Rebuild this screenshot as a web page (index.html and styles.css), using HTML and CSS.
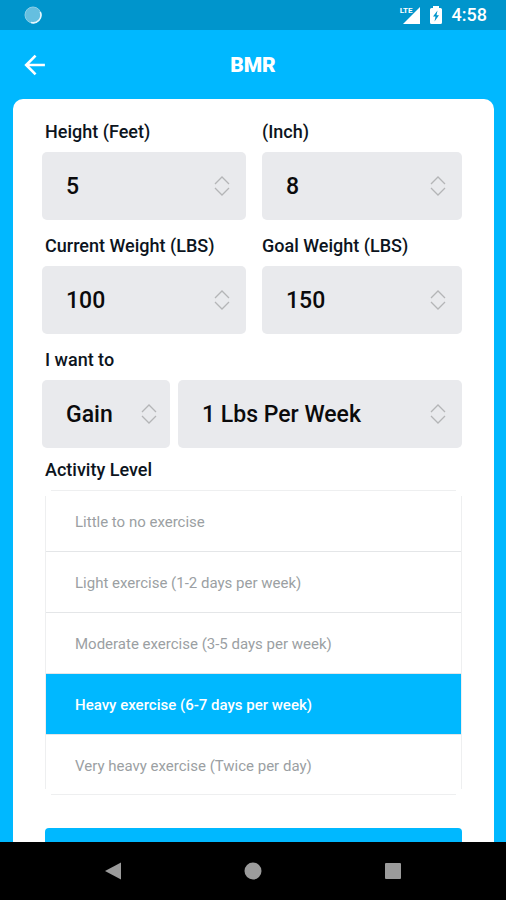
FILE: index.html
```html
<!DOCTYPE html>
<html lang="en">
<head>
<meta charset="utf-8">
<meta name="viewport" content="width=device-width, initial-scale=1">
<title>BMR</title>
<link rel="stylesheet" href="styles.css">
</head>
<body>
<svg class="defs" aria-hidden="true">
  <symbol id="stepper" viewBox="0 0 16 20">
    <path d="M1 8 8 1l7 7M1 12l7 7 7-7" fill="none" stroke="#b4b5b7" stroke-width="1.3"/>
  </symbol>
</svg>
<div class="status">
  <svg class="status-sync" viewBox="0 0 18 18" aria-hidden="true">
    <circle cx="9" cy="9" r="8" fill="#65bfe0" stroke="#8bcfe8" stroke-width="1"/>
    <path d="M16.300 6A7.800 7.800 0 0 1 7 16.500" fill="none" stroke="#e6f7fd" stroke-width="1.6"/>
  </svg>
  <div class="status-right">
    <div class="signal">
      <span class="lte">LTE</span>
      <svg class="signal-icon" viewBox="0 0 17 17" aria-hidden="true"><path d="M17 0v17H0z" fill="#fff"/></svg>
    </div>
    <svg class="battery" viewBox="0 0 12 18" aria-hidden="true">
      <path d="M3 0h6v2h1.500q1.500 0 1.500 1.500v13q0 1.500-1.500 1.500h-9Q0 18 0 16.500v-13Q0 2 1.500 2H3z" fill="#fff"/>
      <path d="M7.500 4.500 3 10.500h2.500L4.500 15.500 9 9.300H6.500z" fill="#0095cc"/>
    </svg>
    <span class="clock">4:58</span>
  </div>
</div>
<header class="appbar">
  <button class="back" type="button" aria-label="Back">
    <svg viewBox="0 0 20 20" aria-hidden="true"><path d="M19 10H2M10.500 1.500 2 10l8.500 8.500" fill="none" stroke="#fff" stroke-width="2.400"/></svg>
  </button>
  <h1>BMR</h1>
</header>
<main>
  <form class="card">
    <div class="row row-halves">
      <div class="field">
        <label for="feet">Height (Feet)</label>
        <div class="control"><select id="feet"><option>5</option></select><svg class="stepper"><use href="#stepper"/></svg></div>
      </div>
      <div class="field">
        <label for="inch">(Inch)</label>
        <div class="control"><select id="inch"><option>8</option></select><svg class="stepper"><use href="#stepper"/></svg></div>
      </div>
      <div class="field">
        <label for="current">Current Weight (LBS)</label>
        <div class="control"><select id="current"><option>100</option></select><svg class="stepper"><use href="#stepper"/></svg></div>
      </div>
      <div class="field">
        <label for="goal">Goal Weight (LBS)</label>
        <div class="control"><select id="goal"><option>150</option></select><svg class="stepper"><use href="#stepper"/></svg></div>
      </div>
    </div>
    <div class="field">
      <label for="aim">I want to</label>
      <div class="row row-aim">
        <div class="control"><select id="aim"><option>Gain</option></select><svg class="stepper"><use href="#stepper"/></svg></div>
        <div class="control"><select id="rate" aria-label="Rate"><option>1 Lbs Per Week</option></select><svg class="stepper"><use href="#stepper"/></svg></div>
      </div>
    </div>
    <div class="activity" role="radiogroup" aria-labelledby="activity-title">
      <h2 id="activity-title">Activity Level</h2>
      <div class="options">
        <label class="option"><input type="radio" name="activity"><span>Little to no exercise</span></label>
        <label class="option"><input type="radio" name="activity"><span>Light exercise (1-2 days per week)</span></label>
        <label class="option"><input type="radio" name="activity"><span>Moderate exercise (3-5 days per week)</span></label>
        <label class="option"><input type="radio" name="activity" checked><span>Heavy exercise (6-7 days per week)</span></label>
        <label class="option"><input type="radio" name="activity"><span>Very heavy exercise (Twice per day)</span></label>
      </div>
    </div>
    <button class="submit" type="submit" aria-label="Submit"></button>
  </form>
</main>
<nav class="navbar">
  <button type="button" aria-label="Back"><svg viewBox="0 0 18 18"><path d="M17 .5v17L1 9z" fill="#9b9b9b"/></svg></button>
  <button type="button" aria-label="Home"><svg viewBox="0 0 18 18"><circle cx="9" cy="9" r="8.500" fill="#9b9b9b"/></svg></button>
  <button type="button" aria-label="Recent apps"><svg viewBox="0 0 18 18"><rect x="1" y="1" width="16" height="16" rx="1" fill="#9b9b9b"/></svg></button>
</nav>
</body>
</html>
```
FILE: styles.css
```css
* { box-sizing: border-box; }

body {
  margin: 0;
  height: 100vh;
  display: flex;
  flex-direction: column;
  overflow: hidden;
  background: #00b8ff;
  color: #0c1420;
  font-family: Roboto, "Liberation Sans", sans-serif;
}

button { border: 0; padding: 0; background: none; font: inherit; }
svg { display: block; }
.defs { position: absolute; width: 0; height: 0; }

.status {
  flex: none;
  height: 30px;
  padding: 0 19px 0 24px;
  display: flex;
  align-items: center;
  justify-content: space-between;
  background: #0095cc;
  color: #fff;
}
.status-sync { width: 18px; height: 18px; }
.status-right { display: flex; align-items: center; gap: 10px; }
.signal { display: flex; align-items: flex-start; }
.lte {
  margin-right: -10px;
  font-size: 8px;
  line-height: 8px;
  font-weight: 700;
}
.signal-icon { width: 17px; height: 17px; }
.battery { width: 12px; height: 18px; }
.clock { font-size: 18px; line-height: 24px; font-weight: 500; }

.appbar {
  flex: none;
  height: 69px;
  padding: 0 24px;
  display: grid;
  grid-template-columns: 22px 1fr 22px;
  align-items: center;
}
.back svg { width: 22px; height: 22px; }
.appbar h1 {
  margin: 0;
  color: #fff;
  font-size: 21px;
  line-height: 28px;
  font-weight: 900;
  text-align: center;
}

main {
  flex: 1;
  min-height: 0;
  overflow: hidden;
  padding: 0 12px 0 13px;
}
.card {
  padding: 21px 32px 32px 29px;
  border-radius: 10px;
  background: #fff;
}
.row { display: grid; }
.row-halves {
  grid-template-columns: 204fr 200fr;
  gap: 14px 16px;
  margin-bottom: 14px;
}
.row-aim { grid-template-columns: 128fr 284fr; gap: 8px; }

.field > label, .activity h2 {
  display: block;
  margin: 0 0 8px;
  padding-left: 3px;
  font-size: 18px;
  line-height: 24px;
  font-weight: 500;
}
.row-halves .field:nth-child(even) > label { padding-left: 0; }

.control { position: relative; }
.control select {
  appearance: none;
  display: block;
  width: 100%;
  height: 68px;
  padding: 2px 40px 0 24px;
  border: 0;
  border-radius: 5px;
  background: #e9eaed;
  color: #0b0b0c;
  font: 500 23px/32px Roboto, "Liberation Sans", sans-serif;
}
.stepper {
  position: absolute;
  top: 24px;
  right: 16px;
  width: 16px;
  height: 20px;
  pointer-events: none;
}
.row-aim .control:first-child .stepper { right: 13px; }

.activity { margin-top: 10px; }
.options {
  margin-left: 3px;
  padding: 0 1px;
  background:
    linear-gradient(#eeeff0, #eeeff0) center top / calc(100% - 12px) 1px,
    linear-gradient(#eeeff0, #eeeff0) center bottom / calc(100% - 12px) 1px,
    linear-gradient(#eeeff0, #eeeff0) left center / 1px calc(100% - 12px),
    linear-gradient(#eeeff0, #eeeff0) right center / 1px calc(100% - 12px);
  background-repeat: no-repeat;
}
.option {
  position: relative;
  display: flex;
  align-items: center;
  height: 61px;
  padding: 2px 29px 0;
  color: #9b9fa3;
  font-size: 15px;
  line-height: 24px;
}
.option + .option { border-top: 1px solid #e4e6e8; }
.option input {
  appearance: none;
  position: absolute;
  inset: 0;
  margin: 0;
}
.option span { position: relative; }
.option:has(input:checked) {
  background: #00b8ff;
  color: #fff;
  font-weight: 500;
}

.submit {
  display: block;
  width: calc(100% - 3px);
  height: 64px;
  margin: 33px 0 0 3px;
  border-radius: 4px;
  background: #00b8ff;
}

.navbar {
  flex: none;
  height: 58px;
  display: flex;
  justify-content: center;
  align-items: center;
  gap: 122px;
  background: #000;
}
.navbar svg { width: 18px; height: 18px; }
```
